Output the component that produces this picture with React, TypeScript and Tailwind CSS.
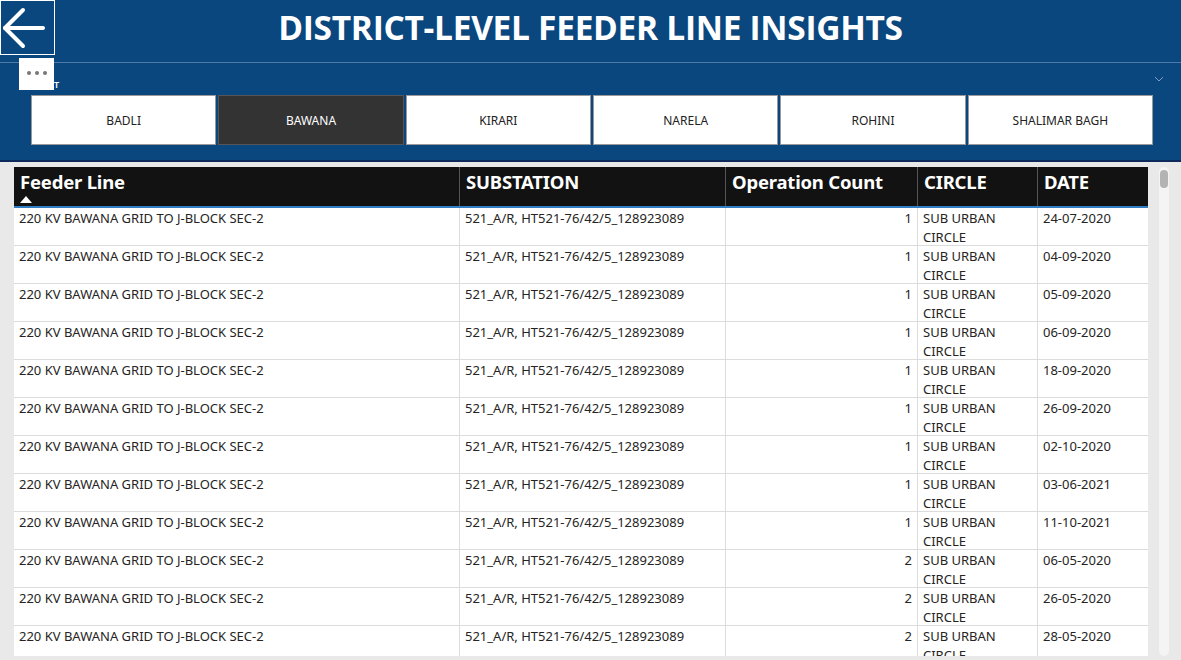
import React from "react";

const districts = ["BADLI", "BAWANA", "KIRARI", "NARELA", "ROHINI", "SHALIMAR BAGH"];

const rows: [number, string][] = [
  [1, "24-07-2020"],
  [1, "04-09-2020"],
  [1, "05-09-2020"],
  [1, "06-09-2020"],
  [1, "18-09-2020"],
  [1, "26-09-2020"],
  [1, "02-10-2020"],
  [1, "03-06-2021"],
  [1, "11-10-2021"],
  [2, "06-05-2020"],
  [2, "26-05-2020"],
  [2, "28-05-2020"],
];

const font = { fontFamily: '"Noto Sans", "Open Sans", sans-serif' };

const App = () => {
  return (
    <div className="w-[1181px] h-[660px] overflow-hidden bg-[#e9e9e9] flex flex-col" style={font}>
      {/* header */}
      <div className="relative h-[162px] bg-[#0a477f] border-b-2 border-[#0d2a5c] shrink-0">
        <div className="flex h-[63px] border-b border-[#4d7aa8]">
          <div className="w-[55px] h-[55px] border border-white flex items-center">
            <svg width="46" height="46" viewBox="0 0 46 46" fill="none" stroke="white" strokeWidth="4" strokeLinecap="round" strokeLinejoin="round">
              <path d="M42 23H4" />
              <path d="M22 5L4 23l18 18" />
            </svg>
          </div>
          <h1
            className="flex-1 text-center text-white font-bold text-[33.5px] leading-[54px] tracking-[-0.3px] pr-[55px]"
            style={{ fontFamily: '"Open Sans", sans-serif' }}
          >
            DISTRICT-LEVEL FEEDER LINE INSIGHTS
          </h1>
        </div>

        {/* more options */}
        <div className="absolute left-[19px] top-[58px] w-[35px] h-[32px] bg-white flex items-center justify-center gap-[4px] pb-[2px]">
          <span className="w-[4px] h-[4px] rounded-full bg-[#777]" />
          <span className="w-[4px] h-[4px] rounded-full bg-[#777]" />
          <span className="w-[4px] h-[4px] rounded-full bg-[#777]" />
        </div>

        <div className="flex items-center justify-between pl-[19px] pr-[17px] h-[32px]">
          <span className="text-white text-[9px] font-semibold pl-[26px] pt-[12px]">ICT</span>
          <svg width="10" height="6" viewBox="0 0 10 6" fill="none" stroke="#7f9bbd" strokeWidth="1">
            <path d="M1 1l4 4 4-4" />
          </svg>
        </div>

        <div className="flex gap-[2px] pl-[31px] pr-[28px]">
          {districts.map((d) => (
            <div
              key={d}
              className={
                d === "BAWANA"
                  ? "flex-1 h-[50px] flex items-center justify-center pt-[2px] text-[12px] border border-[#555] bg-[#333333] text-white"
                  : "flex-1 h-[50px] flex items-center justify-center pt-[2px] text-[12px] border border-[#999] bg-white text-[#222]"
              }
            >
              {d}
            </div>
          ))}
        </div>
      </div>

      {/* table */}
      <div className="flex flex-1 min-h-0 pt-[5px] pb-[4px]">
        <div className="w-[1134px] ml-[14px] overflow-hidden">
          <div className="flex h-[41px] bg-[#121212] text-white font-bold text-[18.5px] leading-[26px] tracking-[-0.2px] border-b-2 border-[#2f7ec4]">
            <div className="w-[446px] px-[6px] pt-[2px] border-r border-[#555] relative">
              Feeder Line
              <svg className="absolute left-[6px] top-[29px]" width="12" height="7" viewBox="0 0 12 7">
                <path d="M0 7L6 0l6 7z" fill="white" />
              </svg>
            </div>
            <div className="w-[266px] px-[6px] pt-[2px] border-r border-[#555]">SUBSTATION</div>
            <div className="w-[192px] px-[6px] pt-[2px] border-r border-[#555]">Operation Count</div>
            <div className="w-[120px] px-[6px] pt-[2px] border-r border-[#555]">CIRCLE</div>
            <div className="flex-1 px-[6px] pt-[2px]">DATE</div>
          </div>
          {rows.map(([count, date], i) => (
            <div key={i} className="flex h-[38px] bg-white text-[13px] leading-[19px] text-[#252423] border-b border-[#dcdcdc]">
              <div className="w-[446px] px-[5px] pt-[1px] border-r border-[#dcdcdc]">220 KV BAWANA GRID TO J-BLOCK SEC-2</div>
              <div className="w-[266px] px-[5px] pt-[1px] border-r border-[#dcdcdc]">521_A/R, HT521-76/42/5_128923089</div>
              <div className="w-[192px] px-[5px] pt-[1px] border-r border-[#dcdcdc] text-right">{count}</div>
              <div className="w-[120px] px-[5px] pt-[1px] border-r border-[#dcdcdc]">SUB URBAN<br />CIRCLE</div>
              <div className="flex-1 px-[5px] pt-[1px]">{date}</div>
            </div>
          ))}
        </div>
        <div className="w-[10px] ml-[11px] bg-[#f4f4f4] rounded-full relative">
          <div className="absolute left-[1px] top-[3px] w-[8px] h-[18px] rounded-full bg-[#b3b3b3]" />
        </div>
      </div>
    </div>
  );
};

export default App;
